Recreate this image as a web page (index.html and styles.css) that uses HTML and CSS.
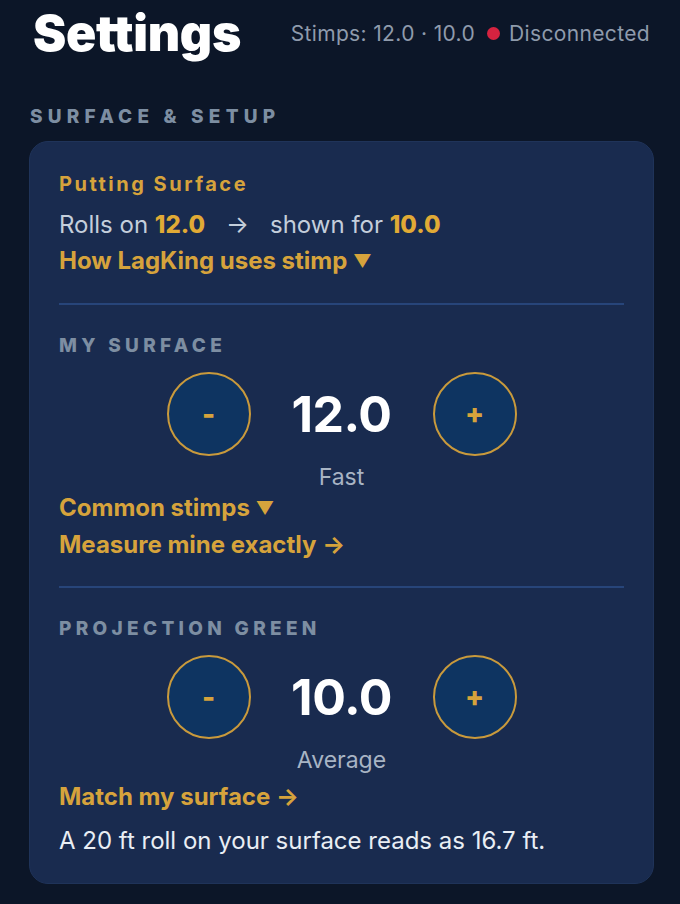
FILE: index.html
```html
<!DOCTYPE html>
<html lang="en">
<head>
<meta charset="utf-8">
<title>Settings</title>
<link rel="stylesheet" href="styles.css">
</head>
<body>
  <header class="top">
    <h1 class="title">Settings</h1>
    <div class="status">
      <span>Stimps: 12.0 · 10.0</span>
      <span class="dot"></span>
      <span>Disconnected</span>
    </div>
  </header>

  <h2 class="section-label">SURFACE &amp; SETUP</h2>

  <section class="card">
    <div class="card-title">Putting Surface</div>
    <p class="summary">Rolls on <b>12.0</b><span class="arrow">→</span>shown for <b>10.0</b></p>
    <a class="link link-how">How LagKing uses stimp <span class="tri">▼</span></a>

    <hr class="divider divider-first">

    <div class="group-label">MY SURFACE</div>
    <div class="stepper">
      <button class="step-btn">-</button>
      <div class="step-value">12.0</div>
      <button class="step-btn">+</button>
    </div>
    <div class="step-caption">Fast</div>
    <a class="link link-common">Common stimps <span class="tri">▼</span></a>
    <a class="link link-measure">Measure mine exactly →</a>

    <hr class="divider divider-second">

    <div class="group-label">PROJECTION GREEN</div>
    <div class="stepper">
      <button class="step-btn">-</button>
      <div class="step-value">10.0</div>
      <button class="step-btn">+</button>
    </div>
    <div class="step-caption">Average</div>
    <a class="link link-match">Match my surface →</a>
    <p class="note">A 20 ft roll on your surface reads as 16.7 ft.</p>
  </section>
</body>
</html>
```

FILE: styles.css
```css
* {
  box-sizing: border-box;
}

html, body {
  margin: 0;
  padding: 0;
  background: #0c1628;
}

body {
  width: 680px;
  height: 904px;
  overflow: hidden;
  font-family: Inter, "Noto Sans", "Liberation Sans", sans-serif;
  color: #e9eef4;
}

/* header row */
.top {
  display: flex;
  align-items: center;
  justify-content: space-between;
  padding: 3px 30px 0 33px;
}

.title {
  margin: 0;
  font-size: 50px;
  font-weight: 900;
  line-height: 60px;
  letter-spacing: -0.3px;
  color: #ffffff;
}

.status {
  display: flex;
  align-items: center;
  font-size: 21px;
  color: #8f9bac;
  letter-spacing: 0.35px;
}

.dot {
  width: 13px;
  height: 13px;
  border-radius: 50%;
  background: #d62340;
  margin: 0 9px 0 12px;
}

.section-label {
  margin: 43px 0 0 30px;
  font-size: 19px;
  line-height: 22px;
  font-weight: 800;
  letter-spacing: 5.2px;
  color: #7d8ea2;
}

/* settings card */
.card {
  margin: 13px 26px 0 29px;
  padding: 31px 29px 28px;
  background: #192b4f;
  border: 1px solid #1f3359;
  border-radius: 19px;
  display: flex;
  flex-direction: column;
}

.card-title {
  font-size: 20px;
  line-height: 22px;
  font-weight: 700;
  letter-spacing: 2.5px;
  color: #d6a33c;
}

.summary {
  margin: 16px 0 0;
  font-size: 24px;
  line-height: 28px;
  color: #c4cedb;
}

.summary b {
  font-weight: 800;
  color: #e1aa35;
}

.arrow {
  margin: 0 21px;
}

.link {
  display: block;
  font-size: 24px;
  line-height: 28px;
  font-weight: 700;
  color: #d6a33c;
  text-decoration: none;
}

.tri {
  font-size: 18px;
  vertical-align: 2px;
}

.link-how {
  margin-top: 8px;
}

.divider {
  margin: 0;
  border: 0;
  height: 2px;
  background: #27457a;
}

.divider-first {
  margin-top: 28px;
}

.divider-second {
  margin-top: 27px;
}

.group-label {
  margin-top: 30px;
  font-size: 19px;
  line-height: 22px;
  font-weight: 800;
  letter-spacing: 4.3px;
  color: #7d8ea2;
}

.stepper {
  display: grid;
  grid-template-columns: 84px 182px 84px;
  justify-content: center;
  align-items: center;
  margin-top: 15px;
}

.step-btn {
  width: 84px;
  height: 84px;
  border-radius: 50%;
  border: 2px solid #c99a3c;
  background: #0e3461;
  color: #d6a33c;
  font-family: inherit;
  font-size: 28px;
  font-weight: 800;
  padding: 0;
  line-height: 1;
}

.step-value {
  text-align: center;
  font-size: 50px;
  font-weight: 700;
  letter-spacing: -0.5px;
  color: #ffffff;
  line-height: 56px;
}

.step-caption {
  margin-top: 8px;
  text-align: center;
  font-size: 23px;
  line-height: 26px;
  color: #a8b4c4;
}

.link-common {
  margin-top: 4px;
}

.link-measure {
  margin-top: 9px;
}

.link-match {
  margin-top: 10px;
}

.note {
  margin: 16px 0 0;
  font-size: 24px;
  line-height: 28px;
  color: #e9eef4;
}
```
